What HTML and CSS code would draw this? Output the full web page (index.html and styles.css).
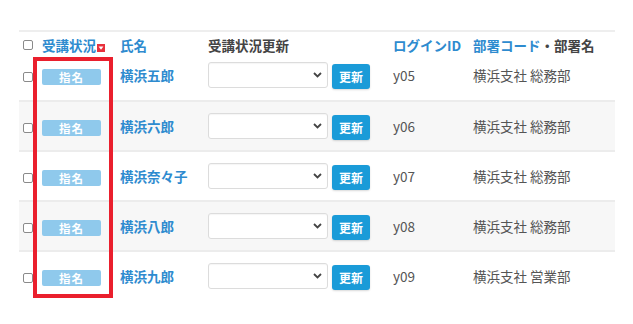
FILE: index.html
```html
<!DOCTYPE html>
<html>
<head>
<meta charset="utf-8">
<title>受講状況</title>
<link rel="stylesheet" href="styles.css">
</head>
<body>

<div class="wrap">
  <table class="list">
    <thead>
      <tr>
        <th class="c-check"><span class="box"></span></th>
        <th class="c-status"><a class="sort">受講状況<svg class="sort-icon" width="8" height="8" viewBox="0 0 8 8"><rect width="8" height="8" fill="#e8303c"/><path d="M1.6 2.6 L6.4 2.6 L4 5.8 Z" fill="#fff"/></svg></a></th>
        <th class="c-name"><a class="sort">氏名</a></th>
        <th class="c-update">受講状況更新</th>
        <th class="c-login"><a class="sort">ログインID</a></th>
        <th class="c-dept"><a class="sort">部署コード</a>・部署名</th>
      </tr>
    </thead>
    <tbody>
      <tr>
        <td><span class="box"></span></td>
        <td><span class="badge">指名</span></td>
        <td><a class="name">横浜五郎</a></td>
        <td><div class="upd"><div class="sel"><select></select><svg class="chev" width="9" height="6" viewBox="0 0 9 6"><path d="M1 1 L4.5 4.5 L8 1" fill="none" stroke="#444" stroke-width="1.8"/></svg></div><button>更新</button></div></td>
        <td class="txt">y05</td>
        <td class="txt">横浜支社 総務部</td>
      </tr>
      <tr>
        <td><span class="box"></span></td>
        <td><span class="badge">指名</span></td>
        <td><a class="name">横浜六郎</a></td>
        <td><div class="upd"><div class="sel"><select></select><svg class="chev" width="9" height="6" viewBox="0 0 9 6"><path d="M1 1 L4.5 4.5 L8 1" fill="none" stroke="#444" stroke-width="1.8"/></svg></div><button>更新</button></div></td>
        <td class="txt">y06</td>
        <td class="txt">横浜支社 総務部</td>
      </tr>
      <tr>
        <td><span class="box"></span></td>
        <td><span class="badge">指名</span></td>
        <td><a class="name">横浜奈々子</a></td>
        <td><div class="upd"><div class="sel"><select></select><svg class="chev" width="9" height="6" viewBox="0 0 9 6"><path d="M1 1 L4.5 4.5 L8 1" fill="none" stroke="#444" stroke-width="1.8"/></svg></div><button>更新</button></div></td>
        <td class="txt">y07</td>
        <td class="txt">横浜支社 総務部</td>
      </tr>
      <tr>
        <td><span class="box"></span></td>
        <td><span class="badge">指名</span></td>
        <td><a class="name">横浜八郎</a></td>
        <td><div class="upd"><div class="sel"><select></select><svg class="chev" width="9" height="6" viewBox="0 0 9 6"><path d="M1 1 L4.5 4.5 L8 1" fill="none" stroke="#444" stroke-width="1.8"/></svg></div><button>更新</button></div></td>
        <td class="txt">y08</td>
        <td class="txt">横浜支社 総務部</td>
      </tr>
      <tr>
        <td><span class="box"></span></td>
        <td><span class="badge">指名</span></td>
        <td><a class="name">横浜九郎</a></td>
        <td><div class="upd"><div class="sel"><select></select><svg class="chev" width="9" height="6" viewBox="0 0 9 6"><path d="M1 1 L4.5 4.5 L8 1" fill="none" stroke="#444" stroke-width="1.8"/></svg></div><button>更新</button></div></td>
        <td class="txt">y09</td>
        <td class="txt">横浜支社 営業部</td>
      </tr>
    </tbody>
  </table>
  <div class="highlight"></div>
</div>

</body>
</html>
```

FILE: styles.css
```css
body {
  margin: 0;
  padding: 30px 0 0 19px;
  background: #fff;
  font-family: "Noto Sans CJK JP", "Noto Sans", sans-serif;
  font-size: 13.5px;
  color: #555;
}

.wrap {
  position: relative;
  width: 596px;
}

table.list {
  width: 596px;
  border-collapse: collapse;
  table-layout: fixed;
  border-top: 2px solid #eee;
  font-size: 13.5px;
}

th, td {
  padding: 0 0 0 4px;
  text-align: left;
  white-space: nowrap;
}

th {
  height: 20px;
  padding-top: 2px;
  line-height: 18px;
  vertical-align: bottom;
  font-weight: bold;
  color: #444;
}

.c-check { width: 15px; }
.c-status { width: 74px; }
.c-name { width: 84px; }
.c-update { width: 181px; }
.c-login { width: 76px; }

td {
  height: 48px;
  vertical-align: middle;
  border-top: 2px solid #ececec;
}

tbody tr:first-child td {
  border-top: 0;
  height: 42px;
  padding-bottom: 4px;
}

tbody tr:nth-child(even) td {
  background: #f7f7f7;
}

a.sort {
  color: #2e8bcf;
  font-weight: bold;
}

.sort-icon {
  vertical-align: -1px;
  margin-left: 1px;
}

.box {
  display: inline-block;
  width: 8px;
  height: 8px;
  border: 1px solid #8a8a8a;
  border-radius: 2px;
  background: #fff;
  vertical-align: middle;
}

th .box { vertical-align: 1px; }

.badge {
  display: inline-block;
  width: 59px;
  height: 16px;
  line-height: 16px;
  border-radius: 2px;
  background: #8fc9ec;
  color: #fff;
  font-size: 11.5px;
  font-weight: bold;
  text-align: center;
  letter-spacing: 1px;
  vertical-align: middle;
}

a.name {
  color: #2e8bcf;
  font-weight: bold;
}

.upd {
  display: flex;
  align-items: center;
  gap: 4px;
}

.sel {
  position: relative;
  width: 120px;
  height: 26px;
}

.sel select {
  appearance: none;
  display: block;
  width: 120px;
  height: 26px;
  border: 1px solid #dcdcdc;
  border-radius: 3px;
  background: #fff;
  box-shadow: inset 0 1px 1px rgba(0,0,0,0.04);
}

.chev {
  position: absolute;
  right: 6px;
  top: 10px;
}

button {
  width: 38px;
  height: 25px;
  margin-top: 2px;
  padding: 0;
  border: 0;
  border-radius: 3px;
  background: #1a9bd8;
  color: #fff;
  font-family: "Noto Sans CJK JP", sans-serif;
  font-size: 12px;
  font-weight: bold;
  box-shadow: 0 1px 2px rgba(0,0,0,0.15);
}

td.txt {
  color: #555;
}

.highlight {
  position: absolute;
  left: 14px;
  top: 27px;
  width: 72px;
  height: 233px;
  border: 4px solid #ea1f2d;
}
```
